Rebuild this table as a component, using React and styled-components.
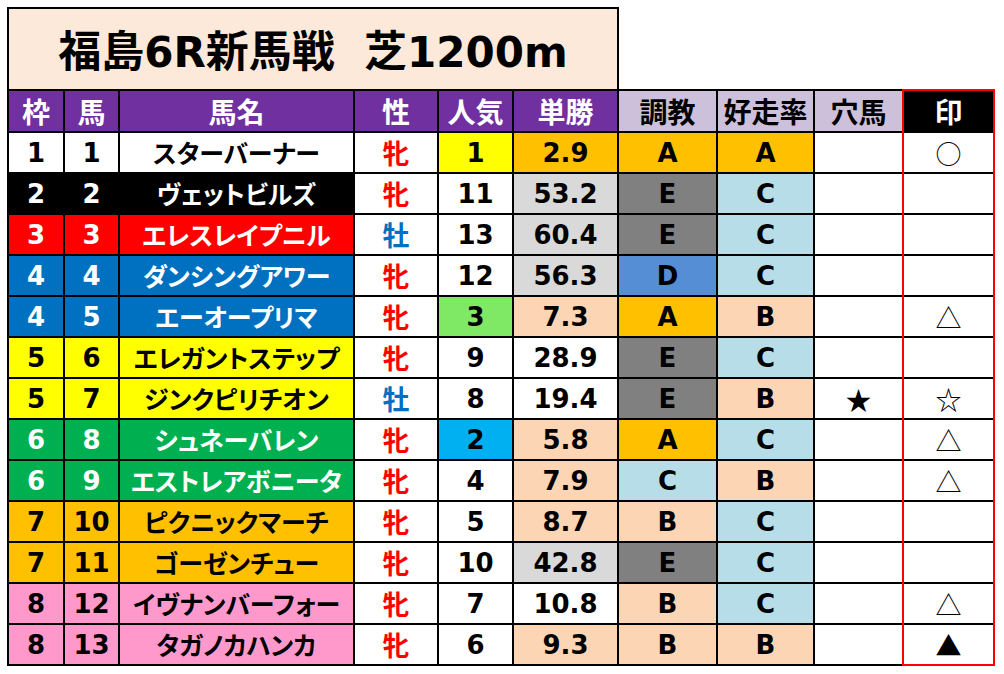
import React from "react";
import styled, { createGlobalStyle } from "styled-components";

const GlobalStyle = createGlobalStyle`
  html, body { margin: 0; padding: 0; background: #ffffff; }
  body { font-family: "DejaVu Sans", "Noto Sans CJK JP", sans-serif; }
`;

const LATIN = `"DejaVu Sans", "Noto Sans CJK JP", sans-serif`;
const CJK = `"Noto Sans CJK JP", sans-serif`;

const C = {
  purple: "#7030A0",
  lavender: "#CCC0DA",
  titleBg: "#FDE9D9",
  yellow: "#FFFF00",
  orange: "#FFC000",
  peach: "#FCD5B4",
  lightBlue: "#B7DEE8",
  lightGray: "#D9D9D9",
  darkGray: "#808080",
  blueD: "#558ED5",
  green3: "#7FE865",
  cyan: "#00B0F0",
  red: "#FF0000",
  blue: "#0070C0",
  green: "#00B050",
  pink: "#FF99CC",
  white: "#FFFFFF",
  black: "#000000",
};

const FRAME = {
  1: { bg: C.white, fg: C.black },
  2: { bg: C.black, fg: C.white },
  3: { bg: C.red, fg: C.white },
  4: { bg: C.blue, fg: C.white },
  5: { bg: C.yellow, fg: C.black },
  6: { bg: C.green, fg: C.white },
  7: { bg: C.orange, fg: C.black },
  8: { bg: C.pink, fg: C.black },
};

const GRADE = { A: C.orange, B: C.peach, C: C.lightBlue, D: C.blueD, E: C.darkGray };

const Page = styled.div`
  padding: 7px 0 0 7px;
  display: flex;
  flex-direction: column;
  align-items: flex-start;
`;

const TitleBox = styled.div`
  width: 608px;
  height: 80px;
  border: 2px solid #000;
  border-bottom: none;
  background: ${C.titleBg};
  display: flex;
  align-items: center;
  justify-content: center;
`;

const Title = styled.h1`
  margin: 0;
  font-family: ${LATIN};
  font-weight: 700;
  font-size: 42px;
  line-height: 1;
  color: #000;
  white-space: pre;
  padding-top: 2px;
`;

const Jp = styled.span`
  font-family: ${CJK};
  font-weight: 700;
  font-size: 43px;
`;

const TableWrap = styled.div`
  position: relative;
`;

const Table = styled.div`
  display: grid;
  grid-template-columns: 54px 53px 233px 82px 73px 103px 97px 95px 87px 89px;
  grid-template-rows: 40px repeat(13, 39px);
  gap: 2px;
  background: #000;
  border: 2px solid #000;
`;

const HeaderCell = styled.div`
  background: ${(p) => p.$bg};
  color: ${(p) => p.$fg};
  font-family: ${CJK};
  font-weight: 700;
  font-size: 28px;
  line-height: 1;
  display: flex;
  align-items: center;
  justify-content: center;
  white-space: nowrap;
`;

const Cell = styled.div`
  background: ${(p) => p.$bg || C.white};
  color: ${(p) => p.$fg || C.black};
  font-family: ${LATIN};
  font-weight: 700;
  font-size: 26px;
  line-height: 1;
  display: flex;
  align-items: center;
  justify-content: center;
  white-space: nowrap;
  padding-top: 1px;
`;

const NameCell = styled(Cell)`
  font-family: ${CJK};
  font-size: 25px;
  font-feature-settings: "palt";
  padding-top: 0;
`;

const SexCell = styled(Cell)`
  font-family: ${CJK};
  font-size: 27px;
  padding-top: 0;
`;

const MarkCell = styled(Cell)`
  font-family: ${CJK};
  font-weight: 400;
  font-size: 26px;
  padding-top: 0;
`;

const RedFrame = styled.div`
  position: absolute;
  top: 0;
  right: 0;
  bottom: 0;
  width: 93px;
  border: 2px solid #FF0000;
  box-sizing: border-box;
  pointer-events: none;
`;

const headers = [
  { t: "枠", bg: C.purple, fg: C.white },
  { t: "馬", bg: C.purple, fg: C.white },
  { t: "馬名", bg: C.purple, fg: C.white },
  { t: "性", bg: C.purple, fg: C.white },
  { t: "人気", bg: C.purple, fg: C.white },
  { t: "単勝", bg: C.purple, fg: C.white },
  { t: "調教", bg: C.lavender, fg: C.black },
  { t: "好走率", bg: C.lavender, fg: C.black },
  { t: "穴馬", bg: C.lavender, fg: C.black },
  { t: "印", bg: C.black, fg: C.white },
];

const rows = [
  [1, 1, "スターバーナー", "牝", 1, C.yellow, "2.9", C.orange, "A", "A", "", "○"],
  [2, 2, "ヴェットビルズ", "牝", 11, null, "53.2", C.lightGray, "E", "C", "", ""],
  [3, 3, "エレスレイプニル", "牡", 13, null, "60.4", C.lightGray, "E", "C", "", ""],
  [4, 4, "ダンシングアワー", "牝", 12, null, "56.3", C.lightGray, "D", "C", "", ""],
  [4, 5, "エーオープリマ", "牝", 3, C.green3, "7.3", C.peach, "A", "B", "", "△"],
  [5, 6, "エレガントステップ", "牝", 9, null, "28.9", null, "E", "C", "", ""],
  [5, 7, "ジンクピリチオン", "牡", 8, null, "19.4", null, "E", "B", "★", "☆"],
  [6, 8, "シュネーバレン", "牝", 2, C.cyan, "5.8", C.peach, "A", "C", "", "△"],
  [6, 9, "エストレアボニータ", "牝", 4, null, "7.9", C.peach, "C", "B", "", "△"],
  [7, 10, "ピクニックマーチ", "牝", 5, null, "8.7", C.peach, "B", "C", "", ""],
  [7, 11, "ゴーゼンチュー", "牝", 10, null, "42.8", C.lightGray, "E", "C", "", ""],
  [8, 12, "イヴナンバーフォー", "牝", 7, null, "10.8", null, "B", "C", "", "△"],
  [8, 13, "タガノカハンカ", "牝", 6, null, "9.3", C.peach, "B", "B", "", "▲"],
];

export default function App() {
  return (
    <>
      <GlobalStyle />
      <Page>
        <TitleBox>
          <Title>
            <Jp>福島</Jp>6R<Jp>新馬戦</Jp>{"  "}<Jp>芝</Jp>1200m
          </Title>
        </TitleBox>
        <TableWrap>
          <Table>
            {headers.map((h) => (
              <HeaderCell key={h.t} $bg={h.bg} $fg={h.fg}>
                {h.t}
              </HeaderCell>
            ))}
            {rows.map((r) => {
              const [waku, uma, name, sex, pop, popBg, odds, oddsBg, train, rate, ana, mark] = r;
              const f = FRAME[waku];
              return (
                <React.Fragment key={uma}>
                  <Cell $bg={f.bg} $fg={f.fg}>{waku}</Cell>
                  <Cell $bg={f.bg} $fg={f.fg}>{uma}</Cell>
                  <NameCell $bg={f.bg} $fg={f.fg}>{name}</NameCell>
                  <SexCell $fg={sex === "牝" ? C.red : C.blue}>{sex}</SexCell>
                  <Cell $bg={popBg}>{pop}</Cell>
                  <Cell $bg={oddsBg}>{odds}</Cell>
                  <Cell $bg={GRADE[train]}>{train}</Cell>
                  <Cell $bg={GRADE[rate]}>{rate}</Cell>
                  <MarkCell>{ana}</MarkCell>
                  <MarkCell>{mark}</MarkCell>
                </React.Fragment>
              );
            })}
          </Table>
          <RedFrame />
        </TableWrap>
      </Page>
    </>
  );
}
